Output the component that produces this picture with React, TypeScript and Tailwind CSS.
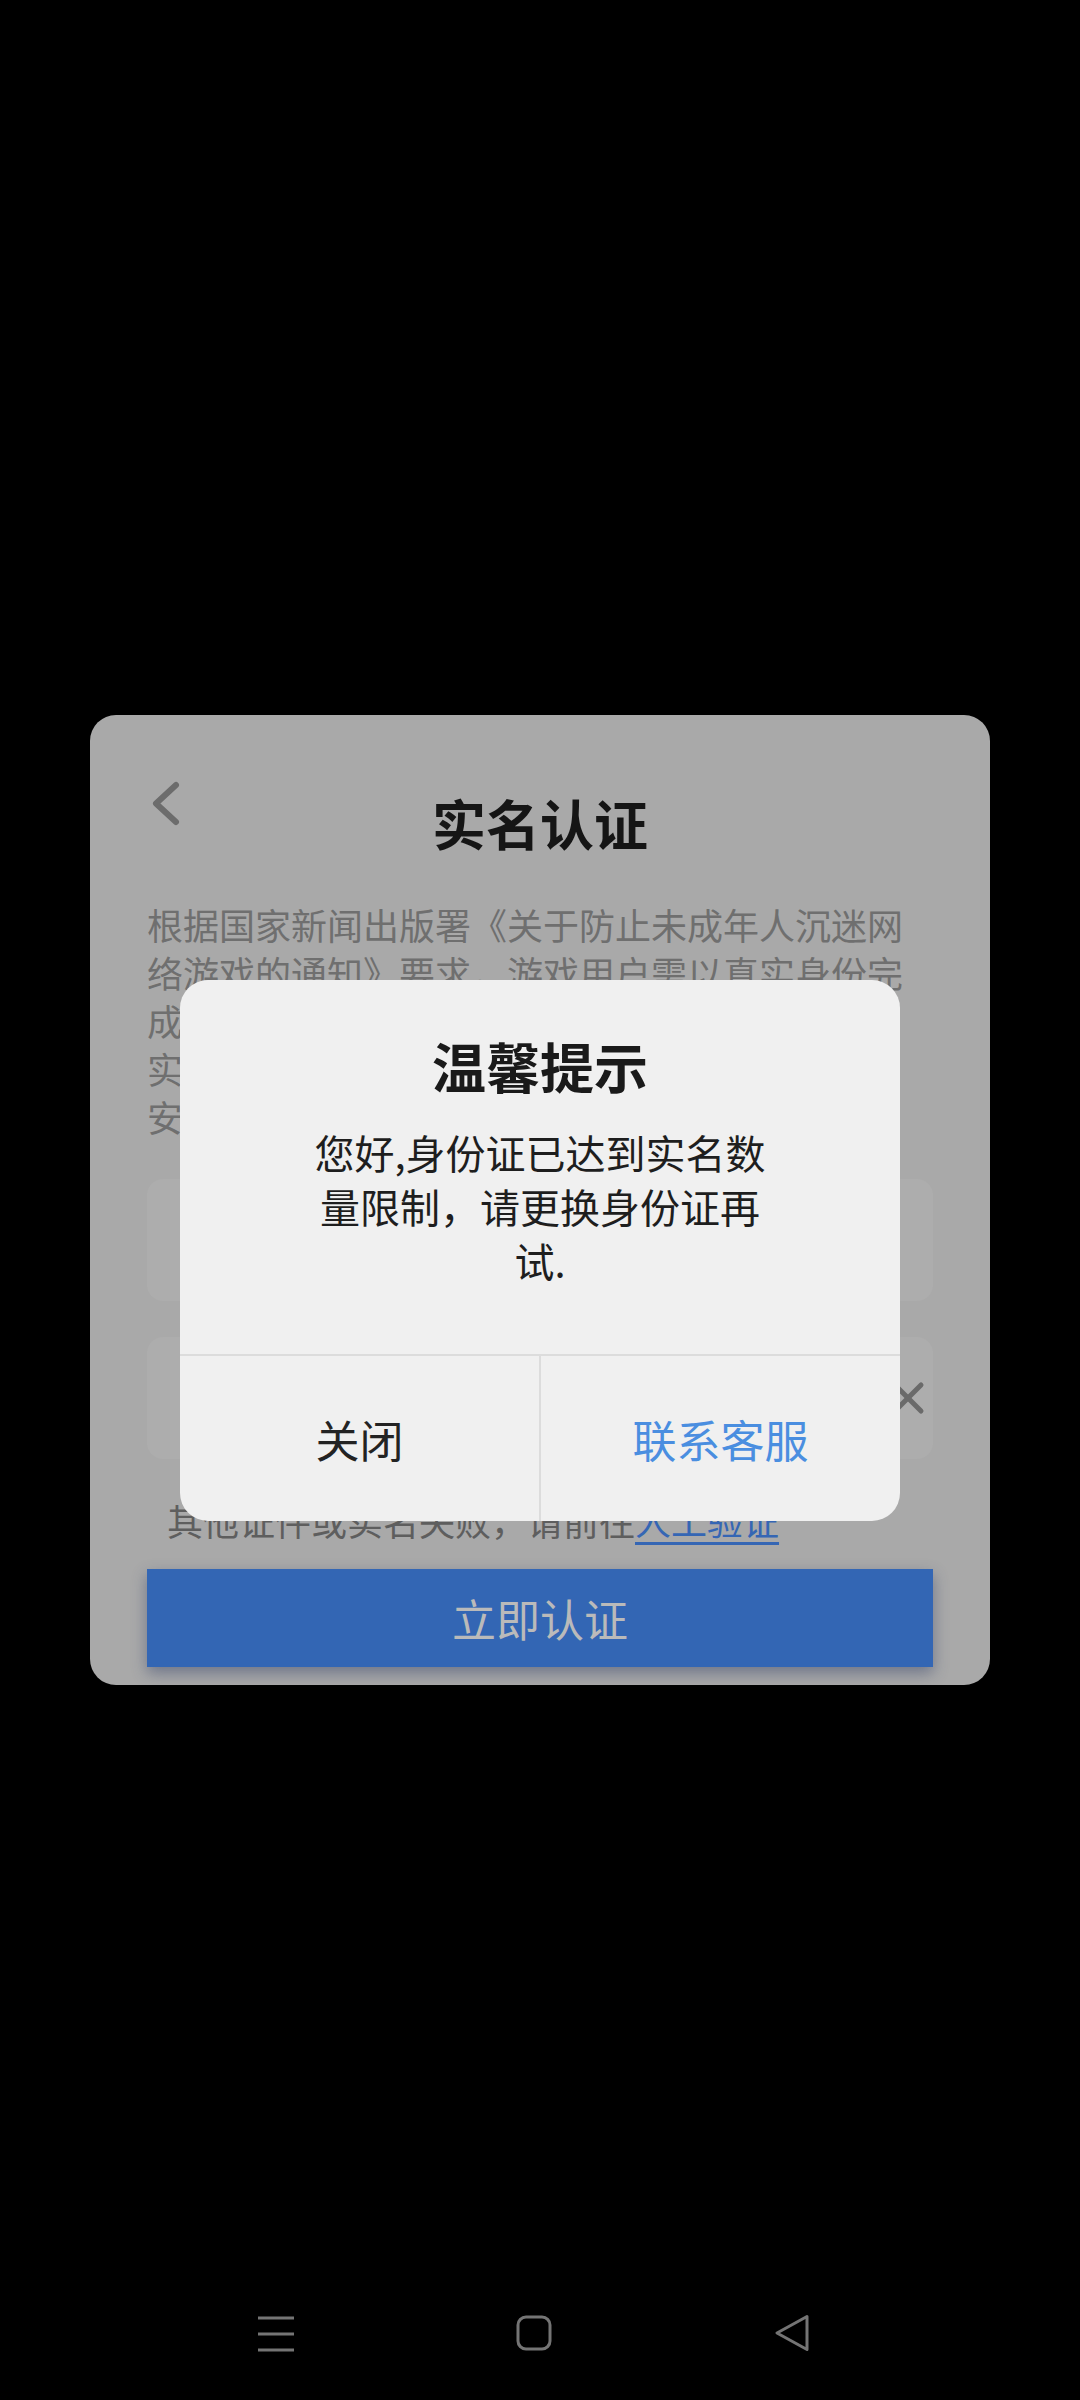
const font = 'font-["Noto_Sans_CJK_SC","Noto_Sans",sans-serif]';

function BackChevron() {
  return (
    <svg width="32" height="47" viewBox="0 0 32 47" fill="none" stroke="#6c6c6c" strokeWidth="6" strokeLinecap="round" strokeLinejoin="round">
      <polyline points="26,5 6,23.5 26,42" />
    </svg>
  );
}

function ClearIcon() {
  return (
    <svg width="34" height="34" viewBox="0 0 34 34" fill="none" stroke="#6a6a6a" strokeWidth="5" strokeLinecap="round">
      <line x1="4" y1="4" x2="30" y2="30" />
      <line x1="30" y1="4" x2="4" y2="30" />
    </svg>
  );
}

function NavMenu() {
  return (
    <svg width="36" height="38" viewBox="0 0 36 38" fill="none" stroke="#747474" strokeWidth="3">
      <line x1="0" y1="4" x2="36" y2="4" />
      <line x1="0" y1="20" x2="36" y2="20" />
      <line x1="0" y1="36" x2="36" y2="36" />
    </svg>
  );
}

function NavHome() {
  return (
    <svg width="36" height="38" viewBox="0 0 36 38" fill="none" stroke="#747474" strokeWidth="3">
      <rect x="2" y="3" width="32" height="32" rx="8" />
    </svg>
  );
}

function NavBack() {
  return (
    <svg width="36" height="38" viewBox="0 0 36 38" fill="none" stroke="#747474" strokeWidth="3" strokeLinejoin="round">
      <path d="M33 2.5 L3 19 L33 35.5 Z" />
    </svg>
  );
}

function VerifyCard() {
  return (
    <div className="w-[900px] rounded-[26px] bg-[#a9a9a9] px-[57px] pt-[58px] pb-[18px]">
      {/* header */}
      <div className="relative flex h-[100px] items-center justify-center">
        <div className="absolute left-[3px] top-[7px]">
          <BackChevron />
        </div>
        <h1 className="text-[54px] leading-[70px] font-bold text-[#151515]">实名认证</h1>
      </div>

      <p className="mt-[27px] text-[36px] leading-[48px] text-[#6f6f6f]">
        根据国家新闻出版署《关于防止未成年人沉迷网络游戏的通知》要求，游戏用户需以真实身份完成实名注册。为保障您的账号安全及游戏体验，实名信息仅用于防沉迷系统的身份核验与保护，安全可靠。
      </p>

      <div className="mt-[39px] flex h-[122px] items-center rounded-[16px] bg-[#adadad] px-[44px] text-[36px] text-[#8a8a8a]">
        请输入真实姓名
      </div>
      <div className="mt-[36px] flex h-[122px] items-center justify-between rounded-[16px] bg-[#adadad] pl-[44px] pr-[8px] text-[36px] text-[#8a8a8a]">
        <span>请输入身份证号</span>
        <ClearIcon />
      </div>

      <p className="mt-[37px] pl-[20px] text-[36px] leading-[48px] text-[#5e5e5e]">
        其他证件或实名失败，请前往<span className="text-[#3566b4] underline underline-offset-[6px]">人工验证</span>
      </p>

      <button className="mt-[25px] flex h-[98px] w-full items-center justify-center bg-[#3366b4] text-[44px] text-[#bababa] shadow-[0_6px_14px_rgba(40,55,100,0.45)]">
        立即认证
      </button>
    </div>
  );
}

function TipDialog() {
  return (
    <div className="absolute left-[180px] top-[980px] flex h-[541px] w-[720px] flex-col overflow-hidden rounded-[28px] bg-[#f0f0f0]">
      <div className="flex h-[374px] flex-col items-center pt-[51px]">
        <h2 className="text-[54px] leading-[70px] font-bold text-[#1a1a1a]">温馨提示</h2>
        <p className="mt-[24px] w-[470px] text-center text-[40px] leading-[54px] text-[#1e1e1e]">
          您好,身份证已达到实名数量限制，请更换身份证再试.
        </p>
      </div>
      <div className="flex flex-1 border-t-2 border-[#dcdcdc]">
        <button className="flex flex-1 items-center justify-center border-r-2 border-[#dcdcdc] text-[44px] text-[#232323]">
          关闭
        </button>
        <button className="flex flex-1 items-center justify-center text-[44px] text-[#4a8ee0]">
          联系客服
        </button>
      </div>
    </div>
  );
}

export default function App() {
  return (
    <div className={`relative flex h-[2400px] w-full items-center justify-center bg-black ${font}`}>
      <VerifyCard />
      <TipDialog />

      {/* system nav bar */}
      <div className="absolute bottom-0 left-0 flex h-[134px] w-full items-center justify-center gap-[222px] pr-[12px]">
        <NavMenu />
        <NavHome />
        <NavBack />
      </div>
    </div>
  );
}
